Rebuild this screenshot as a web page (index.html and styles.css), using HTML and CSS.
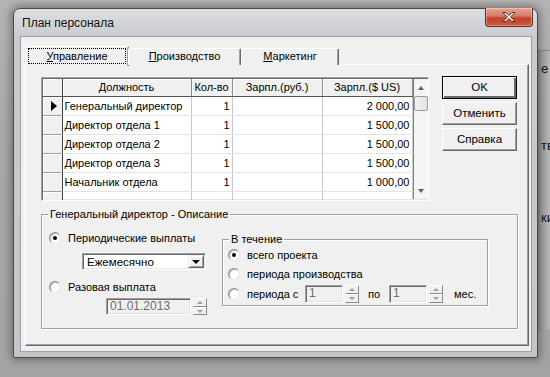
FILE: index.html
```html
<!DOCTYPE html>
<html lang="ru">
<head>
<meta charset="utf-8">
<title>План персонала</title>
<link rel="stylesheet" href="styles.css">
</head>
<body>
<div class="desktop">
  <div class="bgapp">
    <span class="bg-t1">е</span>
    <span class="bg-t2">тва</span>
    <span class="bg-t3">ки</span>
  </div>
  <div class="window">
    <div class="titlebar">
      <span class="title">План персонала</span>
      <div class="closebtn">
        <svg width="16" height="12" viewBox="0 0 16 12"><path d="M2 1.5 L5 1.5 L8 4.5 L11 1.5 L14 1.5 L9.6 6 L14 10.5 L11 10.5 L8 7.5 L5 10.5 L2 10.5 L6.4 6 Z" fill="#fff" stroke="#5a2a22" stroke-width="1" stroke-linejoin="round"/></svg>
      </div>
    </div>
    <div class="client">
      <div class="tabs">
        <div class="tab active"><span class="focus"><u>У</u>правление</span></div>
        <div class="tab"><u>П</u>роизводство</div>
        <div class="tab"><u>М</u>аркетинг</div>
      </div>
      <div class="page">
        <div class="toprow">
          <div class="grid">
            <table class="gtable">
              <colgroup><col class="c0"><col class="c1"><col class="c2"><col class="c3"><col class="c4"></colgroup>
              <thead>
                <tr><th class="ind"></th><th>Должность</th><th>Кол-во</th><th>Зарпл.(руб.)</th><th>Зарпл.($ US)</th></tr>
              </thead>
              <tbody>
                <tr><td class="ind"><span class="arrow"></span></td><td class="cur">Генеральный директор</td><td class="num">1</td><td></td><td class="num">2 000,00</td></tr>
                <tr><td class="ind"></td><td>Директор отдела 1</td><td class="num">1</td><td></td><td class="num">1 500,00</td></tr>
                <tr><td class="ind"></td><td>Директор отдела 2</td><td class="num">1</td><td></td><td class="num">1 500,00</td></tr>
                <tr><td class="ind"></td><td>Директор отдела 3</td><td class="num">1</td><td></td><td class="num">1 500,00</td></tr>
                <tr><td class="ind"></td><td>Начальник отдела</td><td class="num">1</td><td></td><td class="num">1 000,00</td></tr>
                <tr class="partial"><td class="ind"></td><td></td><td></td><td></td><td></td></tr>
              </tbody>
            </table>
            <div class="vscroll">
              <div class="sarrow up"></div>
              <div class="thumb"></div>
              <div class="track"></div>
              <div class="sarrow down"></div>
            </div>
          </div>
          <div class="buttons">
            <div class="btn default">OK</div>
            <div class="btn">Отменить</div>
            <div class="btn">Справка</div>
          </div>
        </div>
        <div class="group main">
          <span class="glabel">Генеральный директор - Описание</span>
          <div class="gcols">
            <div class="leftcol">
              <div class="radio-row"><span class="radio on"></span><span>Периодические выплаты</span></div>
              <div class="combo"><span class="ctext">Ежемесячно</span><span class="cbtn"><span class="tri-down"></span></span></div>
              <div class="radio-row r2"><span class="radio"></span><span>Разовая выплата</span></div>
              <div class="daterow">
                <div class="edit disabled date">01.01.2013</div>
                <div class="spin"><span class="sp up"><i></i></span><span class="sp down"><i></i></span></div>
              </div>
            </div>
            <div class="group during">
              <span class="glabel">В течение</span>
              <div class="radio-row"><span class="radio on"></span><span>всего проекта</span></div>
              <div class="radio-row"><span class="radio"></span><span>периода производства</span></div>
              <div class="radio-row r3">
                <span class="radio"></span><span class="lbl-c">периода с</span>
                <div class="edit disabled small">1</div>
                <div class="spin tall"><span class="sp up"><i></i></span><span class="sp down"><i></i></span></div>
                <span class="lbl-po">по</span>
                <div class="edit disabled small">1</div>
                <div class="spin tall"><span class="sp up"><i></i></span><span class="sp down"><i></i></span></div>
                <span class="lbl-mes">мес.</span>
              </div>
            </div>
          </div>
        </div>
      </div>
    </div>
  </div>
</div>
</body>
</html>
```

FILE: styles.css
```css
* { box-sizing: border-box; }
html, body { margin: 0; padding: 0; }
body {
  width: 550px; height: 377px; overflow: hidden;
  font-family: "Liberation Sans", Arial, sans-serif;
  font-size: 11px; color: #000;
}
.desktop {
  position: relative; width: 550px; height: 377px; overflow: hidden;
  background: linear-gradient(180deg, #b4b4b4 0%, #a8a8a8 40%, #a4a4a4 100%);
}
.bgapp {
  position: absolute; left: 536px; top: 50px; width: 40px; height: 280px;
  background: linear-gradient(90deg, #7a7a7a 0px, #a0a0a0 5px, #b8b8b8 14px);
  border-top: 1px solid #8a8a8a;
}
.bgapp span { position: absolute; left: 5px; font-size: 13px; color: #111; }
.bg-t1 { top: 10px; }
.bg-t2 { top: 87px; }
.bg-t3 { top: 159px; }
.window {
  position: absolute; left: 13px; top: 8px; width: 525px; height: 350px;
  border-radius: 7px 7px 2px 2px;
  border: 1px solid #4a4a4a;
  background: linear-gradient(180deg, #dcdee1 0px, #c9cbce 28px, #c2c5c9 100%);
  box-shadow: 0 0 8px 2px rgba(60,60,60,0.55);
  padding: 0 5px 5px 6px;
  display: flex; flex-direction: column;
}
.titlebar {
  height: 27px; display: flex; align-items: center; position: relative;
  padding-left: 2px;
}
.title { font-size: 12px; color: #111; margin-top: 1px; }
.closebtn {
  position: absolute; right: -1px; top: -1px; width: 48px; height: 19px;
  border: 1px solid #5c2b22; border-top: none;
  border-radius: 0 0 4px 4px;
  background: linear-gradient(180deg, #e4a797 0%, #d77a66 45%, #c1422a 55%, #cf5a3d 100%);
  box-shadow: inset 0 0 0 1px rgba(255,210,200,0.5);
  display: flex; align-items: center; justify-content: center;
}
.client {
  flex: 1; background: #f0f0f0;
  border: 1px solid #9aa0a8;
  padding: 9px 2px 5px 4px;
  display: flex; flex-direction: column;
}
.tabs { display: flex; height: 19px; padding-left: 2px; position: relative; z-index: 1; }
.tab {
  height: 17px; margin-top: 2px;
  border: 1px solid #fff; border-bottom: none;
  border-right-color: #696969;
  box-shadow: inset -1px 0 0 #a0a0a0;
  border-radius: 2px 2px 0 0;
  text-align: center; line-height: 15px;
  background: #f0f0f0;
}
.tab:nth-child(2) { width: 113px; }
.tab:nth-child(3) { width: 98px; }
.tab.active {
  width: 104px; height: 20px; margin-top: 0; margin-left: -2px; margin-right: -1px;
  padding: 1px 2px 0 2px;
}
.tab.active .focus { display: block; border: 1px dotted #000; height: 16px; line-height: 14px; }
.page {
  flex: 1; margin-top: -1px;
  border: 1px solid #fff; border-right-color: #696969; border-bottom-color: #696969;
  box-shadow: inset -1px -1px 0 #a0a0a0;
  padding: 12px 0 0 15px;
}
.toprow { display: flex; align-items: flex-start; }
.grid {
  width: 388px; height: 124px;
  border: 1px solid; border-color: #a0a0a0 #fff #fff #a0a0a0;
  box-shadow: inset 1px 1px 0 #696969, inset -1px -1px 0 #e3e3e3;
  padding: 1px;
  display: flex; overflow: hidden; background: #fff;
}
.gtable { border-collapse: collapse; table-layout: fixed; width: 369px; }
.c0 { width: 19px; } .c1 { width: 129px; } .c2 { width: 41px; } .c3 { width: 90px; } .c4 { width: 90px; }
.gtable th {
  height: 17px; font-weight: normal; background: #f0f0f0;
  border-right: 1px solid #8a8a8a; border-bottom: 1px solid #555;
  box-shadow: inset 1px 1px 0 #fff;
  padding: 0; text-align: center; white-space: nowrap; overflow: hidden;
}
.gtable td {
  height: 19px; padding: 0 2px; white-space: nowrap; overflow: hidden;
  border-right: 1px solid #c8c8c8; border-bottom: 1px solid #e3e3e3;
}
.gtable td.ind {
  background: #f0f0f0; border-right: 1px solid #404040; border-bottom: 1px solid #a0a0a0;
  box-shadow: inset 1px 1px 0 #fff; position: relative;
}
.gtable th.ind { border-right: 1px solid #404040; }
.gtable td.num { text-align: right; }
.gtable tr.partial td { height: 10px; }
.arrow {
  position: absolute; left: 8px; top: 4px; width: 0; height: 0;
  border-left: 6px solid #000; border-top: 5px solid transparent; border-bottom: 5px solid transparent;
}
.vscroll {
  width: 16px; display: flex; flex-direction: column; align-items: center;
  background: #f4f4f4; border-left: 1px solid #808080;
}
.sarrow { height: 17px; width: 15px; position: relative; }
.sarrow::after {
  content: ""; position: absolute; left: 4px; width: 0; height: 0;
  border-left: 3.5px solid transparent; border-right: 3.5px solid transparent;
}
.sarrow.up::after { top: 7px; border-bottom: 4px solid #606060; }
.sarrow.down::after { top: 7px; border-top: 4px solid #606060; }
.thumb {
  width: 14px; height: 15px; border: 1px solid #9a9a9a; border-radius: 2px;
  background: linear-gradient(90deg, #f2f2f2, #e2e2e2);
}
.track { flex: 1; }
.buttons { display: flex; flex-direction: column; gap: 3px; margin-left: 13px; margin-top: -1px; }
.btn {
  width: 75px; height: 23px; text-align: center; line-height: 21px;
  background: #f0f0f0;
  border: 1px solid; border-color: #fff #696969 #696969 #fff;
  box-shadow: inset -1px -1px 0 #a0a0a0;
  font-size: 11.5px;
}
.btn.default {
  border: 1px solid #000;
  box-shadow: inset 1px 1px 0 #fff, inset -2px -2px 0 #696969, inset -1px -1px 0 #a0a0a0;
}
.group {
  position: relative;
  border: 1px solid #a0a0a0;
  box-shadow: 1px 1px 0 #fff, inset 1px 1px 0 #fff;
}
.group .glabel {
  position: absolute; top: -8px; left: 6px; padding: 0 2px; background: #f0f0f0; line-height: 14px;
}
.group.main { width: 477px; height: 115px; margin-top: 13px; padding: 16px 0 0 7px; }
.gcols { display: flex; align-items: flex-start; }
.leftcol { width: 173px; display: flex; flex-direction: column; }
.radio-row { display: flex; align-items: center; height: 14px; white-space: nowrap; }
.radio {
  width: 12px; height: 12px; border-radius: 50%; flex: none;
  border: 1px solid; border-color: #8c8c8c #e8e8e8 #e8e8e8 #8c8c8c;
  background: radial-gradient(circle at 60% 60%, #fff 40%, #e8e8e8 100%);
  box-shadow: inset 1px 1px 0 #bdbdbd;
  margin-right: 7px; position: relative;
}
.radio.on::after {
  content: ""; position: absolute; left: 3px; top: 3px; width: 4px; height: 4px; border-radius: 50%; background: #000;
}
.combo {
  margin: 8px 0 0 33px; width: 124px; height: 17px;
  border: 1px solid; border-color: #a0a0a0 #fff #fff #a0a0a0;
  box-shadow: inset 1px 1px 0 #696969, inset -1px -1px 0 #e3e3e3;
  background: #fff; display: flex; align-items: center; padding: 1px;
}
.ctext { flex: 1; padding-left: 3px; font-size: 11.5px; }
.cbtn {
  width: 16px; height: 13px; background: #f0f0f0;
  border: 1px solid; border-color: #f0f0f0 #696969 #696969 #f0f0f0;
  box-shadow: inset 1px 1px 0 #fff, inset -1px -1px 0 #a0a0a0;
  position: relative;
}
.tri-down {
  position: absolute; left: 3px; top: 4px; width: 0; height: 0;
  border-left: 4px solid transparent; border-right: 4px solid transparent; border-top: 4px solid #000;
}
.radio-row.r2 { margin-top: 10px; }
.daterow { display: flex; margin: 4px 0 0 57px; gap: 2px; }
.edit {
  height: 17px; padding: 1px 3px; flex: none;
  border: 1px solid; border-color: #a0a0a0 #fff #fff #a0a0a0;
  box-shadow: inset 1px 1px 0 #696969, inset -1px -1px 0 #e3e3e3;
  background: #fff; line-height: 13px;
}
.edit.disabled { background: #f0f0f0; color: #6d6d6d; }
.edit.date { width: 85px; font-size: 12px; }
.spin { width: 14px; height: 17px; display: flex; flex-direction: column; flex: none; }
.sp {
  flex: 1; background: #f0f0f0; position: relative;
  border: 1px solid; border-color: #fff #8a8a8a #8a8a8a #fff;
}
.sp i {
  position: absolute; left: 3px; width: 0; height: 0;
  border-left: 3px solid transparent; border-right: 3px solid transparent;
}
.sp.up i { top: 2px; border-bottom: 3px solid #a0a0a0; }
.sp.down i { top: 2px; border-top: 3px solid #a0a0a0; }
.group.during {
  width: 266px; height: 67px; margin-top: 8px;
  padding: 8px 0 0 5px;
  display: flex; flex-direction: column; gap: 4.5px;
}
.radio-row.r3 { height: 18px; }
.lbl-c { width: 58px; flex: none; }
.edit.small { width: 38px; height: 18px; font-size: 12px; }
.spin.tall { height: 18px; margin-left: 2px; }
.lbl-po { margin-left: 9px; width: 21px; flex: none; }
.lbl-mes { margin-left: 11px; }
```
